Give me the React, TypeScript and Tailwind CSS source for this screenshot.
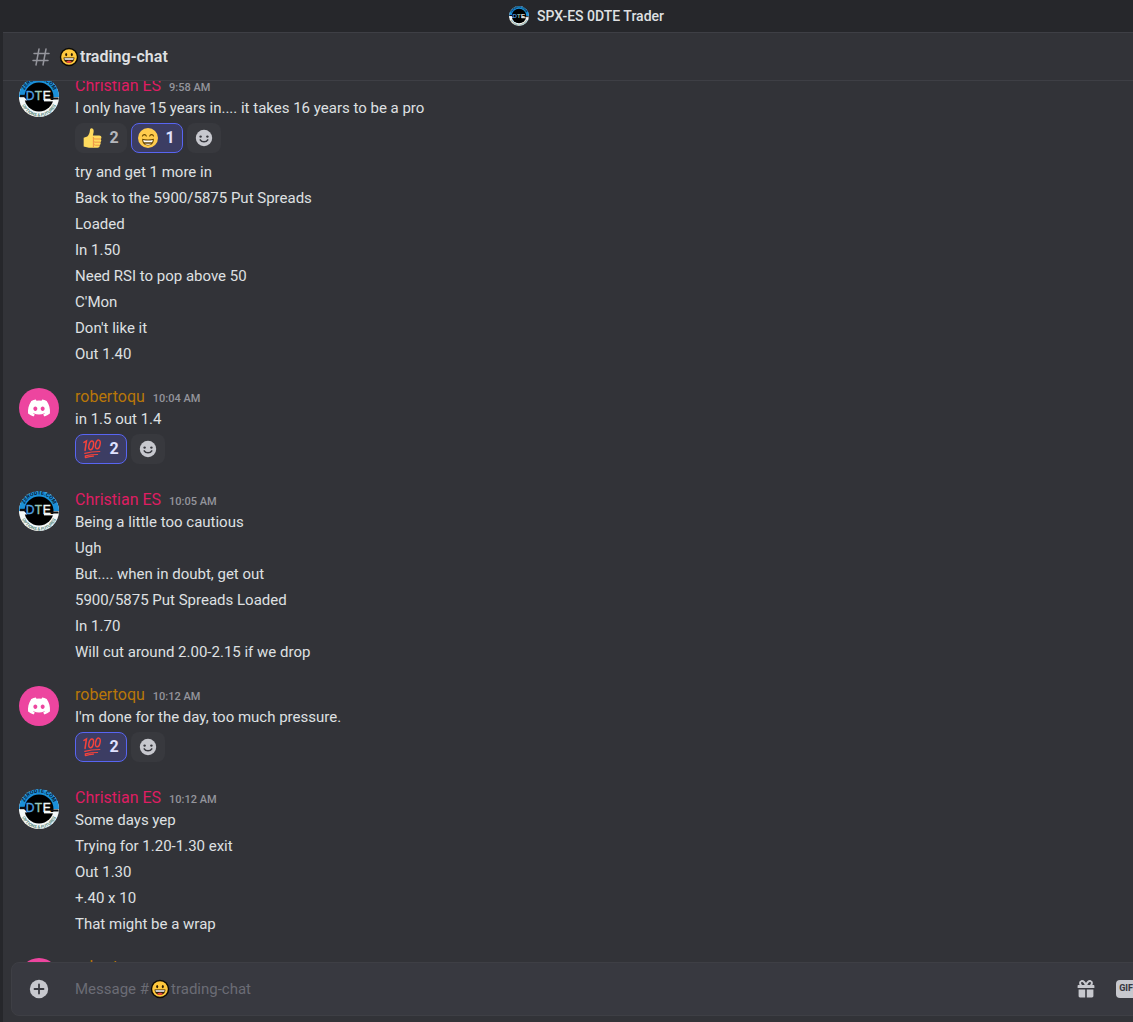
import { useId } from 'react';
import type { ReactNode } from 'react';
import { FaDiscord } from 'react-icons/fa';

type Author = 'christian' | 'roberto';

type Reaction = {
  emoji: 'thumbs' | 'grin' | 'hundred';
  count: number;
  mine?: boolean;
};

type Line = {
  text: string;
  reactions?: Reaction[];
};

type Group = {
  id: number;
  author: Author;
  time: string;
  lines: Line[];
};

const groups: Group[] = [
  {
    id: 1,
    author: 'christian',
    time: '9:58 AM',
    lines: [
      {
        text: 'I only have 15 years in.... it takes 16 years to be a pro',
        reactions: [
          { emoji: 'thumbs', count: 2 },
          { emoji: 'grin', count: 1, mine: true },
        ],
      },
      { text: 'try and get 1 more in' },
      { text: 'Back to the 5900/5875 Put Spreads' },
      { text: 'Loaded' },
      { text: 'In 1.50' },
      { text: 'Need RSI to pop above 50' },
      { text: "C'Mon" },
      { text: "Don't like it" },
      { text: 'Out 1.40' },
    ],
  },
  {
    id: 2,
    author: 'roberto',
    time: '10:04 AM',
    lines: [
      {
        text: 'in 1.5 out 1.4',
        reactions: [{ emoji: 'hundred', count: 2, mine: true }],
      },
    ],
  },
  {
    id: 3,
    author: 'christian',
    time: '10:05 AM',
    lines: [
      { text: 'Being a little too cautious' },
      { text: 'Ugh' },
      { text: 'But.... when in doubt, get out' },
      { text: '5900/5875 Put Spreads Loaded' },
      { text: 'In 1.70' },
      { text: 'Will cut around 2.00-2.15 if we drop' },
    ],
  },
  {
    id: 4,
    author: 'roberto',
    time: '10:12 AM',
    lines: [
      {
        text: "I'm done for the day, too much pressure.",
        reactions: [{ emoji: 'hundred', count: 2, mine: true }],
      },
    ],
  },
  {
    id: 5,
    author: 'christian',
    time: '10:12 AM',
    lines: [
      { text: 'Some days yep' },
      { text: 'Trying for 1.20-1.30 exit' },
      { text: 'Out 1.30' },
      { text: '+.40 x 10' },
      { text: 'That might be a wrap' },
    ],
  },
  { id: 6, author: 'roberto', time: '', lines: [] },
];

const DteLogo = ({ className }: { className: string }) => {
  const id = useId();
  return (
    <svg viewBox="0 0 40 40" className={className} aria-hidden="true">
      <circle cx="20" cy="20" r="20" fill="#f4f8f8" />
      <path d="M0 20a20 20 0 0 1 40 0z" fill="#1b8fd8" />
      <circle cx="20" cy="20" r="14.5" fill="#000" />
      <path d="M1 17.800h6v2.400H1z" fill="#0b0d10" />
      <path d="M32 20.500h7.500v2H32z" fill="#0b0d10" />
      <path d="M0 21h6l2 2.500H1z" fill="#f4f8f8" />
      <path d="M25 23h13v1.400H25z" fill="#f4f8f8" />
      <path id={`${id}-top`} d="M4.500 19a15.500 15.500 0 0 1 31 0" fill="none" />
      <path id={`${id}-bottom`} d="M1.500 21a18.500 18.500 0 0 0 37 0" fill="none" />
      <text className="font-['Roboto'] font-bold" fontSize="5.400" fill="#0b2036" textAnchor="middle">
        <textPath href={`#${id}-top`} startOffset="50%">ZERODTE.COM</textPath>
      </text>
      <text className="font-['Roboto'] font-bold" fontSize="4.400" fill="#5d8a80" textAnchor="middle">
        <textPath href={`#${id}-bottom`} startOffset="50%">OPTIONS &amp; FUTURES</textPath>
      </text>
      <text className="font-['Liberation_Sans']" y="23" fontSize="12" fill="#4d9fe0" strokeWidth="0.400">
        <tspan x="6.800" fill="#4d9fe0" stroke="#4d9fe0">D</tspan>
        <tspan x="15.800" fill="#9cc9b8" stroke="#9cc9b8">T</tspan>
        <tspan x="23.800" fill="#f4f8f8" stroke="#f4f8f8">E</tspan>
      </text>
    </svg>
  );
};

const SmileyIcon = () => (
  <svg viewBox="0 0 20 20" className="size-5 shrink-0" aria-hidden="true">
    <circle cx="10" cy="10" r="9.200" fill="#0c0a05" />
    <circle cx="10" cy="10" r="7.800" fill="#ffc83d" />
    <ellipse cx="7.200" cy="7.600" rx="1" ry="1.700" fill="#2b1c05" />
    <ellipse cx="12.800" cy="7.600" rx="1" ry="1.700" fill="#2b1c05" />
    <path d="M4.600 10.600h10.800c0 3.400-2.300 5.400-5.400 5.400s-5.400-2-5.400-5.400z" fill="#2b1c05" />
    <path d="M5.300 11.200h9.400l-.4 1.600H5.700z" fill="#fff" />
    <path d="M7.200 15c.8-1 1.700-1.200 2.800-1.200s2 .2 2.800 1.200c-.8.700-1.700 1-2.800 1s-2-.3-2.800-1z" fill="#e8453c" />
  </svg>
);

const ThumbsUp = () => (
  <svg viewBox="0 0 36 36" className="size-5" aria-hidden="true">
    <path
      d="M3 17.500 9.500 15.500C12.500 12.500 13.800 9 14.200 4.500 14.400 1.500 15.700.2 17.600.4c3 .3 3.800 3.600 3.300 6.800-.4 2.600-1 4.600-1.300 6.300H31c2.500 0 4 1.500 4 3.500 0 1.300-.6 2.200-1.500 2.800.8.7 1.200 1.600 1.200 2.600 0 1.500-.8 2.600-1.900 3.100.5.600.8 1.400.8 2.300 0 1.600-1 2.700-2.300 3.100.3.500.4 1 .4 1.600 0 1.900-1.500 3-3.700 3H12.500L3 33.500z"
      fill="#ffdb5e"
    />
    <path
      d="M33 19.800H23.500c-1.800 0-2.800-1-3-2.300M32.500 25.500h-9c-1.500 0-2.600-1-2.700-2.400M31 31h-7c-1.500 0-2.500-.9-2.600-2.200M20.500 17v17"
      fill="none"
      stroke="#ee9547"
      strokeWidth="1.800"
      strokeLinecap="round"
    />
  </svg>
);

const Grin = () => (
  <svg viewBox="0 0 36 36" className="size-5" aria-hidden="true">
    <circle cx="18" cy="18" r="18" fill="#ffcc4d" />
    <path
      d="M8 14.500c1-3.500 6-3.500 7 0M21 14.500c1-3.500 6-3.500 7 0"
      fill="none"
      stroke="#664500"
      strokeWidth="2"
      strokeLinecap="round"
    />
    <path d="M7.500 19.500c3.200 1 6.500 1.400 10.500 1.400s7.300-.4 10.500-1.400C29 27 24.500 31.500 18 31.500S7 27 7.500 19.500z" fill="#664500" />
    <path d="M9.300 21.700c3 .7 5.800.9 8.700.9s5.700-.2 8.700-.9l-1.200 4h-15zM12 28.200h12c-1.600 1.400-3.500 2-6 2s-4.400-.6-6-2z" fill="#fff" />
  </svg>
);

const Hundred = () => (
  <svg viewBox="0 0 36 36" className="size-5" fill="none" stroke="#f4433c" strokeLinecap="round" aria-hidden="true">
    <path d="M3.500 6 8 3.500 5.500 20.500" strokeWidth="2.800" />
    <ellipse cx="16.500" cy="11.500" rx="4" ry="8" transform="rotate(12 16.500 11.500)" strokeWidth="2.600" />
    <ellipse cx="28.500" cy="9.800" rx="4" ry="8" transform="rotate(12 28.500 9.800)" strokeWidth="2.600" />
    <path d="M5 25.800c8-2.300 17-3.300 27-3.300M6 33.500v-3c7-1.800 14-2.600 22-2.600M6.500 33.500c5-1.600 9-2.300 14-2.600" strokeWidth="2.200" />
  </svg>
);

const AddReaction = () => (
  <svg viewBox="0 0 18 18" className="size-4.5" aria-hidden="true">
    <circle cx="9" cy="9" r="8.200" fill="#c7c8ce" />
    <circle cx="5.600" cy="7.600" r="1.200" fill="#37383e" />
    <circle cx="12.400" cy="7.600" r="1.200" fill="#37383e" />
    <path d="M5.200 10.800c1.500 2.700 6.100 2.700 7.600 0" fill="none" stroke="#37383e" strokeWidth="1.500" strokeLinecap="round" />
  </svg>
);

const emojis: Record<Reaction['emoji'], ReactNode> = {
  thumbs: <ThumbsUp />,
  grin: <Grin />,
  hundred: <Hundred />,
};

const Avatar = ({ author }: { author: Author }) =>
  author === 'christian' ? (
    <DteLogo className="mt-0.5 size-10 shrink-0" />
  ) : (
    <div className="mt-0.5 flex size-10 shrink-0 items-center justify-center rounded-full bg-[#ed459f]">
      <FaDiscord className="size-6 text-white" />
    </div>
  );

const Reactions = ({ items }: { items: Reaction[] }) => (
  <div className="my-1 flex gap-1">
    {items.map((item) => (
      <button
        key={item.emoji}
        aria-label={`${item.emoji}, ${item.count}`}
        aria-pressed={!!item.mine}
        className={`flex h-7.5 w-13 items-center justify-between rounded-lg border px-1.5 text-base font-bold ${
          item.mine
            ? 'border-[#5865f2] bg-[#3c3d63] text-[#e0e2ff]'
            : 'border-[#38393e] bg-[#38393e] text-[#b5b7bc]'
        }`}
      >
        {emojis[item.emoji]}
        <span className="w-3 text-center">{item.count}</span>
      </button>
    ))}
    <button
      aria-label="Add reaction"
      className="flex h-7.5 w-8.5 items-center justify-center rounded-lg bg-[#38393e]"
    >
      <AddReaction />
    </button>
  </div>
);

const MessageGroup = ({ group }: { group: Group }) => {
  const isChristian = group.author === 'christian';
  return (
    <li className="flex shrink-0 gap-4 px-4 first:-mt-1.5">
      <Avatar author={group.author} />
      <div className="min-w-0 flex-1">
        <h3 className="flex h-5.5 items-baseline gap-2 text-base leading-[22px]">
          <span className={isChristian ? 'text-[#df1d62]' : 'text-[#b97708]'}>
            {isChristian ? 'Christian ES' : 'robertoqu'}
          </span>
          <time className="text-[11px] font-medium text-[#94959c]">{group.time}</time>
        </h3>
        <div className="flex flex-col gap-1">
          {group.lines.map((line) => (
            <div key={line.text}>
              <p className="leading-[22px]">{line.text}</p>
              {line.reactions && <Reactions items={line.reactions} />}
            </div>
          ))}
        </div>
      </div>
    </li>
  );
};

const Composer = () => (
  <form className="mb-1.5 ml-2 -mr-6 flex h-13.5 shrink-0 items-center rounded-lg border border-[#3e3f45] bg-[#383940] pl-[15px]">
    <button type="button" aria-label="Add attachment" className="size-6 shrink-0">
      <svg viewBox="0 0 24 24" aria-hidden="true">
        <circle cx="12" cy="12" r="9.200" fill="#c7c8ce" />
        <path d="M12 7.500v9M7.500 12h9" stroke="#383940" strokeWidth="1.800" strokeLinecap="round" />
      </svg>
    </button>
    <div className="relative ml-6 flex-1">
      <input
        type="text"
        aria-label="Message #trading-chat"
        className="peer h-10 w-full bg-transparent outline-none"
      />
      <div className="pointer-events-none absolute inset-0 flex items-center gap-px text-[#6b6c75] peer-focus:opacity-50">
        <span>Message #</span>
        <SmileyIcon />
        <span>trading-chat</span>
      </div>
    </div>
    <button type="button" aria-label="Send a gift" className="size-5 shrink-0">
      <svg viewBox="0 0 20 20" aria-hidden="true">
        <path
          d="M10 6.500C8.500 2.500 7 1.800 5.600 2.100 3.500 2.600 3.600 5.500 5.500 6.200M10 6.500c1.500-4 3-4.700 4.400-4.400 2.100.5 2 3.400.1 4.100"
          fill="none"
          stroke="#c7c8ce"
          strokeWidth="2"
        />
        <path
          d="M2.600 6h14.800c.6 0 1 .4 1 1v2H1.600V7c0-.6.4-1 1-1zM2.600 10.500h6.600v8H4c-.8 0-1.400-.6-1.400-1.400zM10.800 10.500h6.600v6.600c0 .8-.6 1.400-1.400 1.400h-5.200z"
          fill="#c7c8ce"
        />
      </svg>
    </button>
    <button
      type="button"
      aria-label="Open GIF picker"
      className="mx-5 flex h-4.5 w-5 shrink-0 items-center justify-center rounded-sm bg-[#c7c8ce] text-[9px] font-extrabold text-[#383940]"
    >
      GIF
    </button>
  </form>
);

const App = () => (
  <div className="flex h-screen flex-col overflow-hidden bg-[#26272b] font-['Roboto',sans-serif] text-[15px] text-[#dfe0e2]">
    <header className="flex h-8 shrink-0 items-center justify-center gap-2 pl-10 text-sm font-medium">
      <DteLogo className="size-5" />
      <span>SPX-ES 0DTE Trader</span>
    </header>

    <main className="ml-[3px] flex min-h-0 flex-1 flex-col border-t border-[#3e3f45] bg-[#323338]">
      <div className="flex h-12 shrink-0 items-center border-b border-[#3e3f45] pl-7">
        <svg viewBox="0 0 20 20" className="mr-2 size-5" fill="none" stroke="#94959c" strokeWidth="1.500" strokeLinecap="round" aria-hidden="true">
          <path d="M8 2 5 18M15 2l-3 16M3 6.500h15M2 13.500h15" />
        </svg>
        <h1 className="flex items-center gap-px text-base font-semibold">
          <SmileyIcon />
          trading-chat
        </h1>
      </div>

      <ol className="-mb-px flex min-h-0 flex-1 flex-col gap-[21px] overflow-hidden">
        {groups.map((group) => (
          <MessageGroup key={group.id} group={group} />
        ))}
      </ol>

      <Composer />
    </main>
  </div>
);

export default App;
